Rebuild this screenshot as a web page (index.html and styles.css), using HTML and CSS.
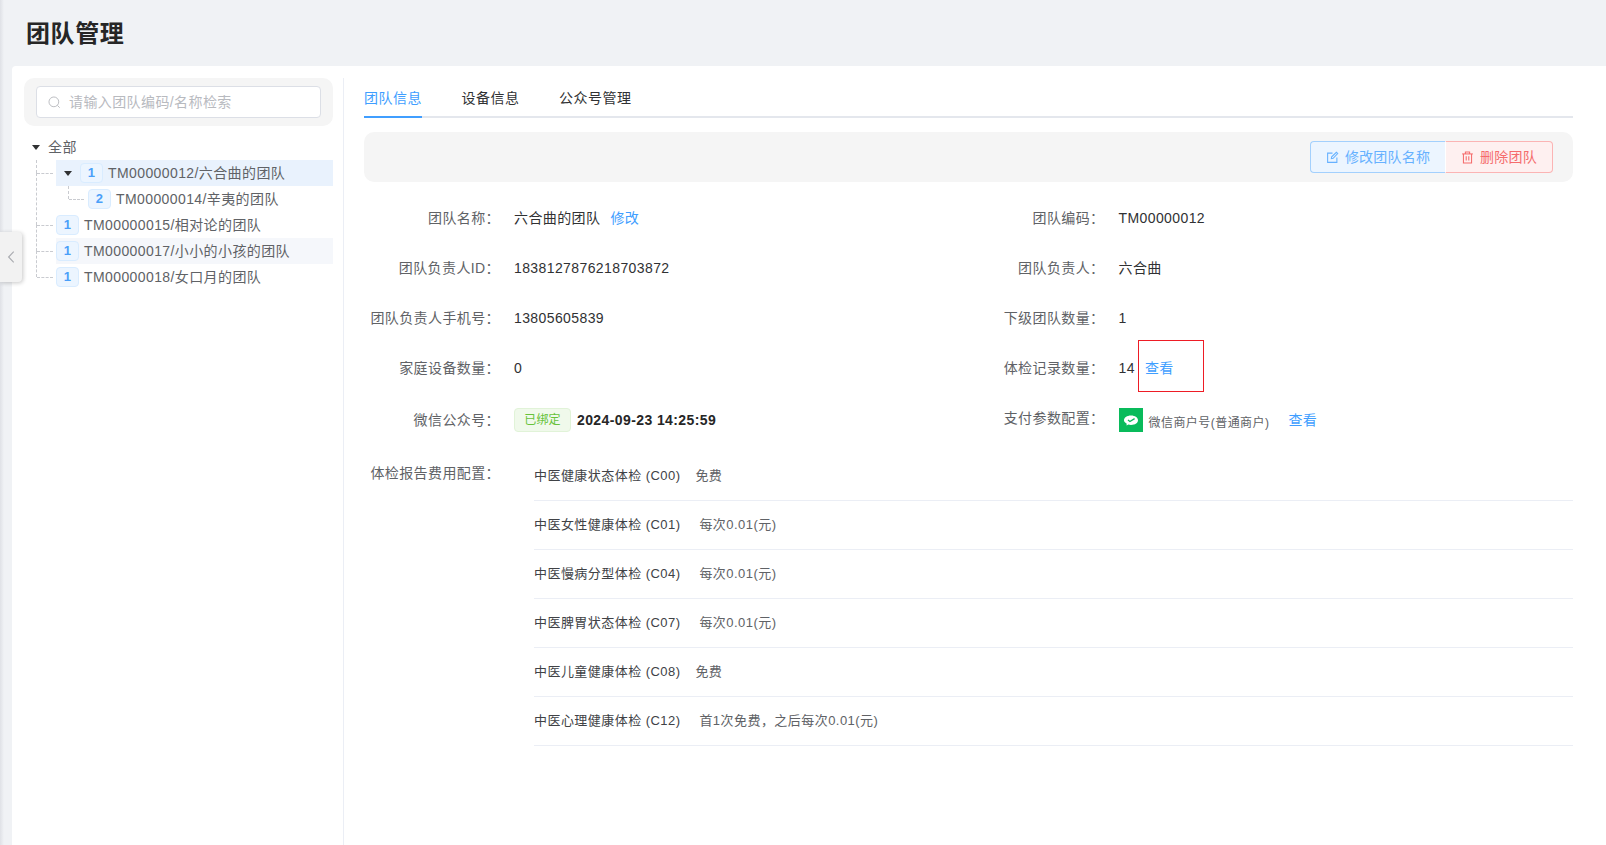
FILE: index.html
```html
<!DOCTYPE html>
<html lang="zh-CN">
<head>
    <meta charset="UTF-8">
    <title>团队管理</title>
    <link rel="stylesheet" href="styles.css">
</head>
<body>
    <div class="page_title">团队管理</div>

    <div class="panel">
        <!-- team tree -->
        <div class="side">
            <div class="search_box">
                <div class="search_input">
                    <svg class="search_icon" viewBox="0 0 16 16" width="13" height="13"><circle cx="7.2" cy="7.2" r="6" fill="none" stroke="#b4b6bb" stroke-width="1.1"/><path d="M11.6 11.6 L14.4 14.4" stroke="#b4b6bb" stroke-width="1.1" fill="none"/></svg>
                    <span>请输入团队编码/名称检索</span>
                </div>
            </div>
            <div class="tree">
                <div class="tree_root"><i class="caret"></i><span>全部</span></div>
                <div class="tree_row branch active">
                    <i class="caret caret_sub"></i><b class="level">1</b><span>TM00000012/六合曲的团队</span>
                </div>
                <div class="tree_row child">
                    <b class="level">2</b><span>TM00000014/辛夷的团队</span>
                </div>
                <div class="tree_row branch">
                    <b class="level">1</b><span>TM00000015/相对论的团队</span>
                </div>
                <div class="tree_row branch hover">
                    <b class="level">1</b><span>TM00000017/小小的小孩的团队</span>
                </div>
                <div class="tree_row branch last">
                    <b class="level">1</b><span>TM00000018/女口月的团队</span>
                </div>
            </div>
        </div>

        <!-- team detail -->
        <div class="main">
            <div class="tabs">
                <div class="tab tab_active">团队信息</div>
                <div class="tab">设备信息</div>
                <div class="tab">公众号管理</div>
            </div>

            <div class="action_bar">
                <div class="btn btn_edit">
                    <svg viewBox="0 0 16 16" width="13" height="13" fill="none" stroke="currentColor" stroke-width="1.3"><path d="M8 2.6 H2 V14 H13.4 V8"/><path d="M6.6 9.4 L7 7.2 L12.8 1.6 L14.4 3.2 L8.8 9 Z"/></svg>
                    <span>修改团队名称</span>
                </div>
                <div class="btn btn_delete">
                    <svg viewBox="0 0 16 16" width="13" height="13" fill="none" stroke="currentColor" stroke-width="1.3"><path d="M1.4 3.6 H14.6"/><path d="M5.4 3.6 V1.2 H10.6 V3.6"/><path d="M3 3.6 V14.8 H13 V3.6"/><path d="M6.4 6.6 V11.8 M9.6 6.6 V11.8"/></svg>
                    <span>删除团队</span>
                </div>
            </div>

            <div class="info_grid">
                <div class="info_item"><label>团队名称：</label><div class="val val_cn">六合曲的团队<a class="link link_gap">修改</a></div></div>
                <div class="info_item"><label>团队编码：</label><div class="val">TM00000012</div></div>
                <div class="info_item"><label>团队负责人ID：</label><div class="val">1838127876218703872</div></div>
                <div class="info_item"><label>团队负责人：</label><div class="val val_cn">六合曲</div></div>
                <div class="info_item"><label>团队负责人手机号：</label><div class="val">13805605839</div></div>
                <div class="info_item"><label>下级团队数量：</label><div class="val">1</div></div>
                <div class="info_item"><label>家庭设备数量：</label><div class="val">0</div></div>
                <div class="info_item"><label>体检记录数量：</label><div class="val">14<a class="link record_link">查看</a></div></div>
                <div class="info_item info_tall"><label>微信公众号：</label><div class="val"><span class="tag">已绑定</span><strong class="bind_time">2024-09-23 14:25:59</strong></div></div>
                <div class="info_item info_tall"><label class="label_up">支付参数配置：</label><div class="val">
                    <span class="wechat">
                        <svg viewBox="0 0 24 24" width="24" height="24"><path d="M12 7.6 C16.2 7.6 19 9.8 19 12.3 C19 14.9 16.2 17 12 17 C11 17 10.2 16.9 9.4 16.6 L7.6 17.4 L7.6 15.6 C5.9 14.7 5 13.5 5 12.3 C5 9.8 7.8 7.6 12 7.6 Z" fill="#fff"/><path d="M9 12 L10.9 13.5 L15.6 10.6" fill="none" stroke="#09bb5b" stroke-width="1.3"/></svg>
                    </span>
                    <span class="merchant">微信商户号(普通商户)</span><a class="link pay_link">查看</a>
                </div></div>
            </div>

            <div class="fee_block">
                <label class="fee_label">体检报告费用配置：</label>
                <div class="fee_list">
                    <div class="fee_row"><span>中医健康状态体检 (C00)</span><em class="free">免费</em></div>
                    <div class="fee_row"><span>中医女性健康体检 (C01)</span><em>每次0.01(元)</em></div>
                    <div class="fee_row"><span>中医慢病分型体检 (C04)</span><em>每次0.01(元)</em></div>
                    <div class="fee_row"><span>中医脾胃状态体检 (C07)</span><em>每次0.01(元)</em></div>
                    <div class="fee_row"><span>中医儿童健康体检 (C08)</span><em class="free">免费</em></div>
                    <div class="fee_row"><span>中医心理健康体检 (C12)</span><em>首1次免费，之后每次0.01(元)</em></div>
                </div>
            </div>
        </div>
    </div>

    <div class="collapse_btn">
        <svg viewBox="0 0 10 16" width="8" height="14" fill="none" stroke="#a9abb0" stroke-width="1.4"><path d="M8.4 1.4 L2 8 L8.4 14.6"/></svg>
    </div>
    <div class="red_mark"></div>
</body>
</html>
```

FILE: styles.css
```css
* {
    box-sizing: border-box;
}
html, body {
    height: 100%;
}
body {
    margin: 0;
    height: 845px;
    overflow: hidden;
    position: relative;
    display: flex;
    flex-direction: column;
    background: linear-gradient(to right, #dfe1e6 0, #f0f2f5 4px);
    color: #303133;
    font-family: "Liberation Sans", "Noto Sans CJK SC", sans-serif;
    font-size: 14px;
    letter-spacing: 0.4px;
}
.page_title {
    height: 66px;
    padding: 2px 0 0 26px;
    line-height: 64px;
    font-size: 24px;
    font-weight: 700;
    letter-spacing: 0.6px;
    color: #262626;
}

.panel {
    flex: 1;
    display: flex;
    margin-left: 12px;
    padding: 12px 0 0 12px;
    background: #fff;
    border-top-left-radius: 4px;
}
.side {
    width: 320px;
    padding-right: 10px;
    border-right: 1px solid #ebeef5;
    flex-shrink: 0;
}
.search_box {
    width: 309px;
    height: 48px;
    padding: 8px 12px;
    background: #f5f5f5;
    border-radius: 10px;
}
.search_input {
    display: flex;
    align-items: center;
    height: 32px;
    padding-left: 11px;
    background: #fff;
    border: 1px solid #dcdfe6;
    border-radius: 4px;
    color: #b8babf;
}
.search_icon {
    margin-right: 8px;
}
.search_input span {
    margin-top: -2px;
}

/* tree */
.tree {
    margin: 8px 0 0 -24px;
    width: 333px;
    color: #606266;
}
.tree_root {
    display: flex;
    align-items: center;
    height: 26px;
    padding-left: 32px;
}
.tree_root span {
    margin: -2px 0 0 -1px;
}
.caret {
    width: 0;
    height: 0;
    margin-right: 9px;
    border-left: 4.5px solid transparent;
    border-right: 4.5px solid transparent;
    border-top: 5px solid #303133;
}
.caret_sub {
    margin: 0 8px 0 8px;
}
.tree_row {
    position: relative;
    display: flex;
    align-items: center;
    height: 26px;
    margin-left: 56px;
}
.tree_row span {
    margin-top: -2px;
}
.tree_row.active {
    background: #e9f2fd;
}
.tree_row.hover {
    background: #f5f7fb;
}
.tree_row.child {
    padding-left: 32px;
}
.level {
    display: block;
    width: 23px;
    height: 20px;
    margin-right: 5px;
    line-height: 18px;
    text-align: center;
    font-size: 13px;
    color: #4a9ff9;
    background: #ecf5ff;
    border: 1px solid #d9ecff;
    border-radius: 4px;
}
/* dashed connectors */
.branch::before {
    content: "";
    position: absolute;
    left: -20px;
    top: -13px;
    height: 26px;
    border-left: 1px dashed #c9cbd0;
}
.branch.active::before {
    top: 0;
    height: 13px;
}
.branch.last::before {
    height: 26px;
}
.branch + .child + .branch::before {
    top: -39px;
    height: 52px;
}
.branch::after {
    content: "";
    position: absolute;
    left: -19px;
    top: 13px;
    width: 16px;
    border-top: 1px dashed #c9cbd0;
}
.child::before {
    content: "";
    position: absolute;
    left: 12px;
    top: 0;
    height: 13px;
    border-left: 1px dashed #c9cbd0;
}
.child::after {
    content: "";
    position: absolute;
    left: 13px;
    top: 13px;
    width: 15px;
    border-top: 1px dashed #c9cbd0;
}

/* right side */
.main {
    flex: 1;
    min-width: 0;
    padding: 0 33px 0 20px;
}
.tabs {
    display: flex;
    gap: 39.5px;
    height: 40px;
    border-bottom: 2px solid #e4e7ed;
}
.tab {
    height: 40px;
    padding-top: 10px;
    line-height: 20px;
    letter-spacing: 0.5px;
    white-space: nowrap;
}
.tab_active {
    color: #409eff;
    border-bottom: 2px solid #409eff;
}
.action_bar {
    display: flex;
    justify-content: flex-end;
    align-items: center;
    height: 50px;
    margin-top: 14px;
    padding-right: 20px;
    background: #f5f5f5;
    border-radius: 10px;
}
.btn {
    display: flex;
    align-items: center;
    justify-content: center;
    gap: 6px;
    height: 32px;
    border: 1px solid;
    letter-spacing: 0.2px;
}
.btn span {
    margin-top: -2px;
}
.btn_edit {
    width: 135px;
    color: #66b1ff;
    background: #ecf5ff;
    border-color: #a3d0fd;
    border-right: none;
    border-radius: 4px 0 0 4px;
}
.btn_delete {
    width: 108px;
    color: #f56c6c;
    background: #fef0f0;
    border-color: #fbb4b4;
    border-left: 1px solid #fff;
    border-radius: 0 4px 4px 0;
}

.info_grid {
    display: grid;
    grid-template-columns: 1fr 1fr;
    margin-top: 11px;
}
.info_item {
    display: flex;
    align-items: center;
    height: 50px;
}
.info_tall {
    height: 53px;
}
label {
    width: 136px;
    margin-top: -2px;
    flex-shrink: 0;
    text-align: right;
    color: #606266;
    white-space: nowrap;
}
.label_up {
    margin-top: -6px;
}
.val {
    display: flex;
    align-items: center;
    margin-left: 14px;
    white-space: nowrap;
}
.val_cn {
    margin-top: -2px;
}
.link {
    color: #409eff;
}
.link_gap {
    margin-left: 10px;
}
.record_link {
    margin: -2px 0 0 10px;
}
.pay_link {
    margin-top: -2px;
}
.tag {
    width: 57px;
    height: 24px;
    line-height: 22px;
    text-align: center;
    font-size: 12px;
    letter-spacing: 0.2px;
    color: #67c23a;
    background: #f0f9eb;
    border: 1px solid #e1f3d8;
    border-radius: 4px;
}
.bind_time {
    margin-left: 6px;
    color: #262626;
}
.wechat {
    display: block;
    width: 24px;
    height: 24px;
    background: #09bb5b;
}
.wechat svg {
    display: block;
}
.merchant {
    margin: 4px 19px 0 6px;
    font-size: 12px;
    letter-spacing: 0.45px;
    color: #606266;
}

/* fee list */
.fee_block {
    display: flex;
    margin-top: 6px;
}
.fee_label {
    margin-top: 11px;
    line-height: 20px;
}
.fee_list {
    flex: 1;
    margin-left: 34px;
    font-size: 13px;
    letter-spacing: 0.45px;
    color: #404246;
}
.fee_row {
    display: flex;
    align-items: center;
    height: 49px;
    padding-bottom: 3px;
    border-bottom: 1px solid #ebeef5;
}
.fee_row em {
    margin-left: 19px;
    font-style: normal;
    color: #606266;
}
.fee_row em.free {
    margin-left: 15px;
}

/* overlays */
.collapse_btn {
    position: absolute;
    left: 0;
    top: 232px;
    width: 22px;
    height: 50px;
    display: flex;
    align-items: center;
    justify-content: center;
    background: #f2f2f2;
    border-radius: 0 4px 4px 0;
    box-shadow: 1px 1px 4px rgba(0, 0, 0, 0.22);
}
.red_mark {
    position: absolute;
    left: 1138px;
    top: 340px;
    width: 66px;
    height: 52px;
    border: 1px solid #ee1c25;
}
```
